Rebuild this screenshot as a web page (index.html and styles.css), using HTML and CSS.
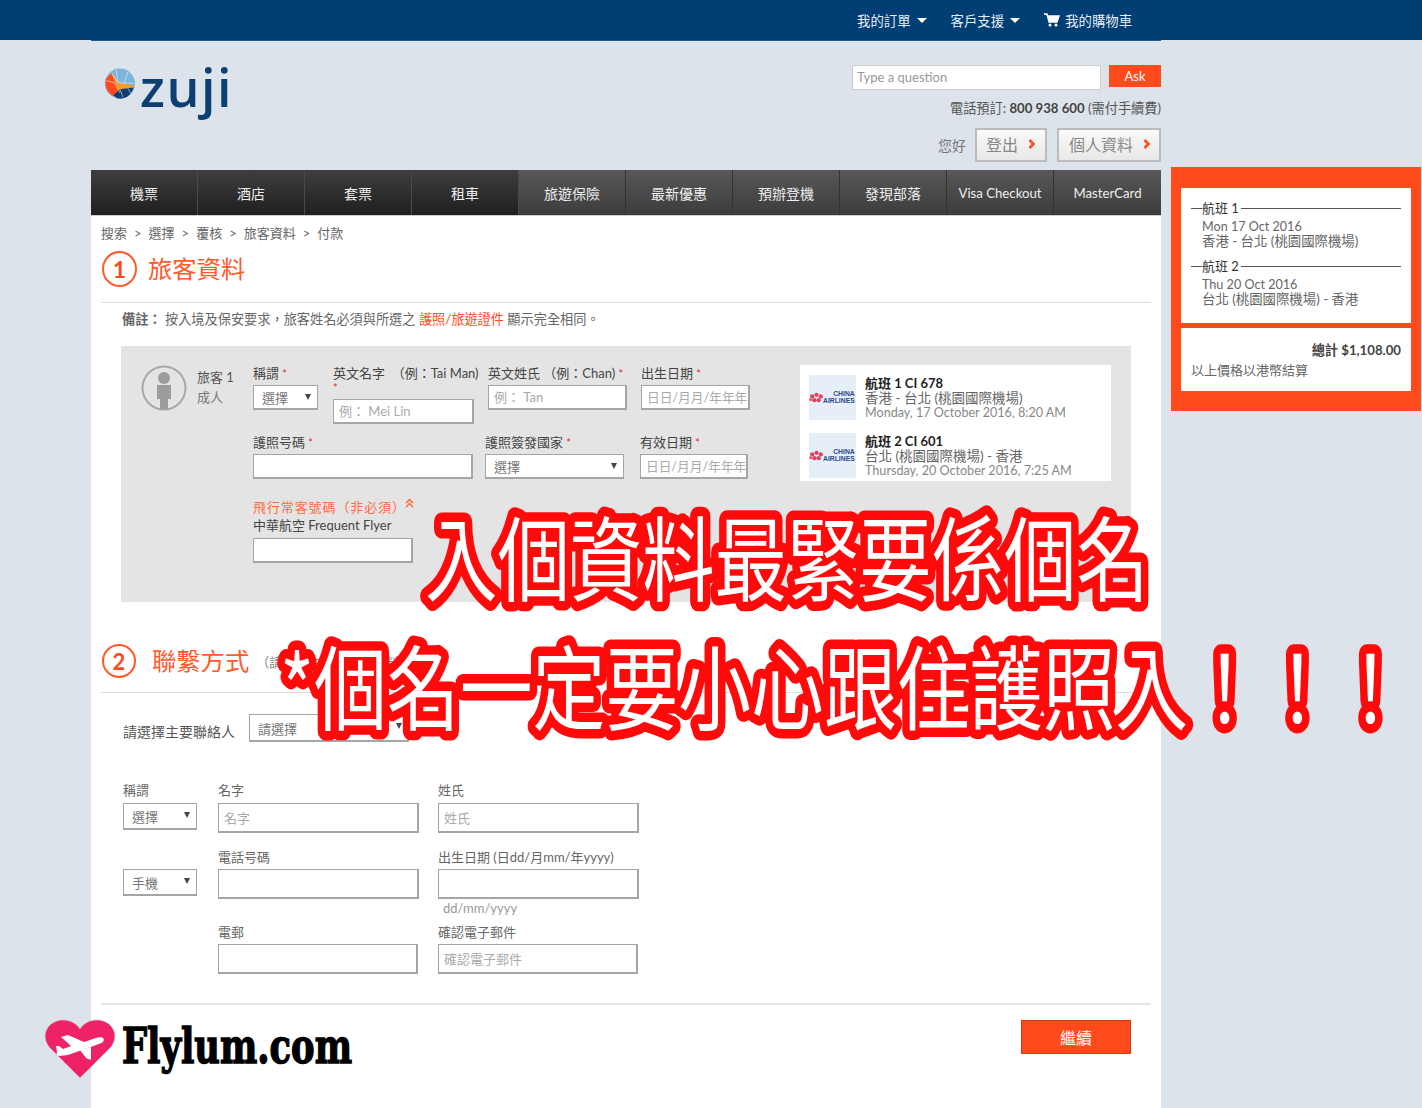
FILE: index.html
```html
<!DOCTYPE html>
<html lang="zh-Hant">
<head>
    <meta charset="UTF-8">
    <title>Zuji</title>
    <link rel="stylesheet" href="styles.css">
</head>
<body>
    <div class="topbar">
        <div class="topbar-inner">
            <span class="top-link">我的訂單<i class="caret"></i></span>
            <span class="top-link">客戶支援<i class="caret"></i></span>
            <span class="top-link cart-link">
                <svg class="cart" viewBox="0 0 16 14" width="16" height="14"><path d="M0 1h3l2 8h8l2-6H4" fill="#fff" stroke="#fff" stroke-width="1.4"/><circle cx="6" cy="12" r="1.5" fill="#fff"/><circle cx="12" cy="12" r="1.5" fill="#fff"/></svg>
                我的購物車
            </span>
        </div>
    </div>

    <div class="page">
        <div class="wrap">
            <header class="header">
                <div class="logo">
                    <svg class="globe" viewBox="0 0 32 32" width="32" height="31">
                        <ellipse cx="16" cy="16" rx="15.500" ry="15.500" fill="#7fb4de"/>
                        <path d="M8 5l5 10 18 3-3 7-13 1-6-9-2-6z" fill="#f59a2b"/>
                        <path d="M1 12l6-7 3 8 6 13-6 3C4 27 1 21 1 16z" fill="#ff4b1b"/>
                        <path d="M9 28l7-6 14-2c-2 7-7 11.500-14 11.500-3 0-5-1.500-7-3.500z" fill="#0d3f70"/>
                        <path d="M7 5l7 10 17 1M12 2l2 13M24 4l-4 13M1 13l9 2 6 11M16 22l3 8M24 21l3 5" stroke="#e6eef5" stroke-width=".6" fill="none"/>
                    </svg>
                    <span class="logo-text">zuji</span>
                </div>
                <div class="header-right">
                    <div class="ask-row">
                        <input class="ask-input" type="text" placeholder="Type a question">
                        <button class="ask-btn" type="button">Ask</button>
                    </div>
                    <div class="phone">電話預訂: <b>800 938 600</b> (需付手續費)</div>
                    <div class="account-row">
                        <span class="hello">您好</span>
                        <a class="acc-btn acc-logout">登出<svg class="chev" viewBox="0 0 8 10" width="8" height="10"><path d="M1.500 1l4 4-4 4" fill="none" stroke="#ff4b1b" stroke-width="2.600"/></svg></a>
                        <a class="acc-btn acc-profile">個人資料<svg class="chev" viewBox="0 0 8 10" width="8" height="10"><path d="M1.500 1l4 4-4 4" fill="none" stroke="#ff4b1b" stroke-width="2.600"/></svg></a>
                    </div>
                </div>
            </header>

            <nav class="nav">
                <a class="tab">機票</a>
                <a class="tab">酒店</a>
                <a class="tab">套票</a>
                <a class="tab">租車</a>
                <a class="tab tab-light">旅遊保險</a>
                <a class="tab tab-light">最新優惠</a>
                <a class="tab tab-light">預辦登機</a>
                <a class="tab tab-light">發現部落</a>
                <a class="tab tab-light tab-latin">Visa Checkout</a>
                <a class="tab tab-light tab-latin">MasterCard</a>
            </nav>

            <main class="main">
                <div class="crumbs">搜索<i>&gt;</i>選擇<i>&gt;</i>覆核<i>&gt;</i>旅客資料<i>&gt;</i>付款</div>

                <div class="section-head head-one">
                    <span class="num">1</span>
                    <h2>旅客資料</h2>
                </div>

                <p class="note"><b>備註：</b> 按入境及保安要求，旅客姓名必須與所選之 <span class="orange">護照/旅遊證件</span> 顯示完全相同。</p>

                <section class="traveller-box">
                    <div class="traveller">
                        <svg class="avatar" viewBox="0 0 46 46" width="46" height="46">
                            <circle cx="23" cy="23" r="21.500" fill="none" stroke="#a8a8a8" stroke-width="2"/>
                            <circle cx="23" cy="13" r="6" fill="#9c9c9c"/>
                            <path d="M16 20h14v14h-3v10h-8V34h-3z" fill="#9c9c9c"/>
                        </svg>
                        <div class="traveller-name"><strong>旅客 1</strong><br>成人</div>
                    </div>

                    <div class="fields">
                        <div class="row row-one">
                            <div class="field w-title">
                                <label>稱謂 <em>*</em></label>
                                <div class="select"><select><option>選擇</option></select></div>
                            </div>
                            <div class="field w-first">
                                <label>英文名字&nbsp;&nbsp;（例：Tai Man)<span class="wrap-star"><em>*</em></span></label>
                                <input class="box-first" type="text" placeholder="例： Mei Lin">
                            </div>
                            <div class="field w-last">
                                <label>英文姓氏&nbsp;（例：Chan) <em>*</em></label>
                                <input class="box-last" type="text" placeholder="例： Tan">
                            </div>
                            <div class="field w-dob">
                                <label>出生日期 <em>*</em></label>
                                <input type="text" placeholder="日日/月月/年年年">
                            </div>
                        </div>
                        <div class="row row-two">
                            <div class="field w-passport">
                                <label>護照号碼 <em>*</em></label>
                                <input type="text">
                            </div>
                            <div class="field w-country">
                                <label>護照簽發國家 <em>*</em></label>
                                <div class="select"><select><option>選擇</option></select></div>
                            </div>
                            <div class="field w-expiry">
                                <label>有效日期 <em>*</em></label>
                                <input type="text" placeholder="日日/月月/年年年">
                            </div>
                        </div>
                        <div class="ff">
                            <div class="ff-toggle">飛行常客號碼（非必須）<svg class="ff-arrows" viewBox="0 0 9 10" width="9" height="10"><path d="M1 5l3.500-3.500L8 5M1 9l3.500-3.500L8 9" fill="none" stroke="#ff6b3d" stroke-width="1.500"/></svg></div>
                            <div class="ff-label">中華航空 Frequent Flyer</div>
                            <input class="ff-input" type="text">
                        </div>
                    </div>

                    <aside class="flights">
                        <div class="flight">
                            <div class="airline">
                                <svg viewBox="0 0 14 10" width="15" height="11"><g fill="#e2415f"><circle cx="7" cy="2.500" r="2"/><circle cx="3" cy="4" r="2"/><circle cx="11" cy="4" r="2"/><circle cx="1.500" cy="7" r="1.200"/><circle cx="5" cy="7.500" r="2"/><circle cx="9" cy="7.500" r="2"/></g></svg>
                                <span>CHINA<br>AIRLINES</span>
                            </div>
                            <div class="flight-text">
                                <b>航班 1 CI 678</b><br>
                                <span class="route">香港 - 台北 (桃園國際機場)</span><br>
                                <span class="when">Monday, 17 October 2016, 8:20 AM</span>
                            </div>
                        </div>
                        <div class="flight">
                            <div class="airline">
                                <svg viewBox="0 0 14 10" width="15" height="11"><g fill="#e2415f"><circle cx="7" cy="2.500" r="2"/><circle cx="3" cy="4" r="2"/><circle cx="11" cy="4" r="2"/><circle cx="1.500" cy="7" r="1.200"/><circle cx="5" cy="7.500" r="2"/><circle cx="9" cy="7.500" r="2"/></g></svg>
                                <span>CHINA<br>AIRLINES</span>
                            </div>
                            <div class="flight-text">
                                <b>航班 2 CI 601</b><br>
                                <span class="route">台北 (桃園國際機場) - 香港</span><br>
                                <span class="when">Thursday, 20 October 2016, 7:25 AM</span>
                            </div>
                        </div>
                    </aside>
                </section>

                <div class="section-head head-two">
                    <span class="num">2</span>
                    <h2>聯繫方式</h2>
                    <small>（請填寫主要聯絡人資料）</small>
                </div>

                <div class="contact-pick">
                    <label>請選擇主要聯絡人</label>
                    <div class="select pick-select"><select><option>請選擇</option></select></div>
                    <a class="orange">清除</a>
                </div>

                <div class="contact-row">
                    <div class="c-col c-a">
                        <label>稱謂</label>
                        <div class="select"><select><option>選擇</option></select></div>
                    </div>
                    <div class="c-col c-b">
                        <label>名字</label>
                        <input type="text" placeholder="名字">
                    </div>
                    <div class="c-col c-b">
                        <label>姓氏</label>
                        <input type="text" placeholder="姓氏">
                    </div>
                </div>
                <div class="contact-row">
                    <div class="c-col c-a">
                        <label>&nbsp;</label>
                        <div class="select"><select><option>手機</option></select></div>
                    </div>
                    <div class="c-col c-b">
                        <label>電話号碼</label>
                        <input type="text">
                    </div>
                    <div class="c-col c-b">
                        <label>出生日期 (日dd/月mm/年yyyy)</label>
                        <input type="text">
                        <div class="hint">dd/mm/yyyy</div>
                    </div>
                </div>
                <div class="contact-row row-mail">
                    <div class="c-col c-a"></div>
                    <div class="c-col c-b">
                        <label>電郵</label>
                        <input type="text">
                    </div>
                    <div class="c-col c-b">
                        <label>確認電子郵件</label>
                        <input type="text" placeholder="確認電子郵件">
                    </div>
                </div>

                <div class="form-foot">
                    <button class="continue" type="button">繼續</button>
                </div>
            </main>
        </div>

        <aside class="summary">
            <div class="sum-card">
                <div class="leg-title"><span>航班 1</span></div>
                <div class="leg-text"><span class="leg-date">Mon 17 Oct 2016</span><br>香港 - 台北 (桃園國際機場)</div>
                <div class="leg-title"><span>航班 2</span></div>
                <div class="leg-text"><span class="leg-date">Thu 20 Oct 2016</span><br>台北 (桃園國際機場) - 香港</div>
            </div>
            <div class="sum-card sum-total">
                <div class="total">總計 $1,108.00</div>
                <div class="currency">以上價格以港幣結算</div>
            </div>
        </aside>
    </div>

    <!-- blog watermark and captions pasted over the screenshot -->
    <svg class="captions" width="1422" height="1108">
        <text class="caption caption-one">入個資料最緊要係個名</text>
        <text class="caption caption-two">*個名一定要小心跟住護照入！！！</text>
    </svg>

    <div class="flylum">
        <svg viewBox="0 0 72 60" width="72" height="60">
            <path d="M36 59L5 28C-5 14 6 1 19 1c8 0 14 4 17 9 3-5 9-9 17-9 13 0 24 13 14 27z" fill="#ee2264" stroke="#c9c9c9" stroke-width=".6"/>
            <path d="M59 19c2 2 0 5-4 6L24 36l-9 1c-2 0-3-3-2-4l-1-6h3l4 3 8-3-10-9 7-2 16 7 12-4c3-1 6-1 7 0z" fill="#fff"/>
            <path d="M36 31l11-3v13l-5-2z" fill="#fff"/>
        </svg>
        <span class="flylum-text">Flylum.com</span>
    </div>
</body>
</html>
```

FILE: styles.css
```css
* {
    box-sizing: border-box;
}
body {
    margin: 0;
    height: 1108px;
    overflow: hidden;
    position: relative;
    background-color: #dce3ea;
    font-family: Lato, "Noto Sans CJK TC", sans-serif;
    font-size: 13px;
    color: #555;
}
input, select, button {
    font-family: Lato, "Noto Sans CJK TC", sans-serif;
}
i, em {
    font-style: normal;
}
.orange {
    color: #ff4b1b;
}

/* top bar */
.topbar {
    height: 40px;
    background-color: #003e73;
}
.topbar-inner {
    width: 1070px;
    height: 40px;
    margin-left: 91px;
    display: flex;
    align-items: center;
    padding-left: 766px;
    color: #e6edf3;
    font-size: 13.400px;
}
.top-link {
    display: flex;
    align-items: center;
    margin-right: 24px;
}
.caret {
    width: 0;
    height: 0;
    margin-left: 6px;
    border-left: 5px solid transparent;
    border-right: 5px solid transparent;
    border-top: 5px solid #fff;
}
.cart {
    margin-right: 5px;
}

.page {
    display: flex;
    align-items: flex-start;
    margin-left: 91px;
}
.wrap {
    width: 1070px;
    border-top: 1px solid #1f5c90;
}

/* header */
.header {
    height: 129px;
    display: flex;
    justify-content: space-between;
}
.logo {
    display: flex;
    align-items: flex-start;
    padding: 27px 0 0 13px;
}
.globe {
    margin-right: 4px;
}
.logo-text {
    margin-top: -21px;
    font-family: "Open Sans", sans-serif;
    font-size: 52px;
    font-weight: 600;
    letter-spacing: 1.500px;
    line-height: 80px;
    color: #0d3f70;
}
.header-right {
    display: flex;
    flex-direction: column;
    align-items: flex-end;
    padding-top: 24px;
}
.ask-row {
    display: flex;
    align-items: flex-start;
}
.ask-input {
    width: 249px;
    height: 25px;
    padding: 0 4px 2px;
    border: 1px solid #ccc;
    border-radius: 2px;
    font-size: 13px;
}
.ask-input::placeholder {
    color: #999;
}
.ask-btn {
    width: 52px;
    height: 22px;
    margin-left: 8px;
    padding: 0;
    border: none;
    background-color: #ff4b1b;
    color: #fff;
    font-size: 13px;
}
.phone {
    margin-top: 8px;
    line-height: 20px;
    font-size: 13.200px;
    color: #555;
}
.phone b {
    color: #444;
}
.account-row {
    display: flex;
    align-items: center;
    margin-top: 10px;
}
.hello {
    margin-right: 9px;
    font-size: 14px;
    color: #777;
}
.acc-btn {
    height: 34px;
    display: flex;
    align-items: center;
    padding-bottom: 2px;
    border: 2px solid #bbb;
    background: linear-gradient(#fafafa, #e8e8e8);
    font-size: 16px;
    color: #888;
}
.acc-logout {
    width: 72px;
    padding-left: 9px;
    margin-right: 10px;
}
.acc-profile {
    width: 104px;
    padding-left: 10px;
}
.chev {
    margin-left: 10px;
}

/* nav */
.nav {
    height: 46px;
    display: flex;
    border-bottom: 1px solid #ccc;
}
.tab {
    width: 107px;
    display: flex;
    align-items: center;
    justify-content: center;
    border-right: 1px solid #4a4a4a;
    background: linear-gradient(#3e3e3e, #1f1f1f);
    color: #eee;
    font-size: 14px;
}
.tab-light {
    background: linear-gradient(#585858, #3c3c3c);
    border-right-color: #333;
}
.tab-latin {
    font-size: 13.200px;
}
.tab:last-child {
    border-right: none;
}

/* main panel */
.main {
    height: 892px;
    padding: 7px 10px 0;
    background-color: #fff;
}
.crumbs {
    height: 20px;
    line-height: 20px;
    color: #666;
}
.crumbs i {
    margin: 0 7px;
}
.section-head {
    display: flex;
    align-items: center;
    border-bottom: 1px solid #ddd;
}
.head-one {
    margin-top: 8px;
    padding-bottom: 15px;
}
.head-one h2 {
    font-size: 24.300px;
    margin-left: 11px;
}
.section-head h2 {
    margin-top: 0;
    margin-bottom: 0;
    font-weight: 400;
    color: #ff5a2a;
    line-height: 34px;
}
.num {
    width: 35px;
    height: 36px;
    display: flex;
    align-items: center;
    justify-content: center;
    margin-left: 1px;
    border: 2px solid #ff5a2a;
    border-radius: 50%;
    font-size: 23px;
    font-weight: 700;
    color: #ff4b1b;
}
.note {
    margin: 6px 0 17px 21px;
    line-height: 20px;
    font-size: 13.200px;
    color: #666;
}

/* traveller box */
.traveller-box {
    height: 256px;
    margin: 0 20px;
    padding: 19px 20px 0;
    display: flex;
    background-color: #e4e4e4;
}
.traveller {
    width: 112px;
    display: flex;
    align-items: flex-start;
    flex-shrink: 0;
}
.traveller-name {
    margin: 2px 0 0 10px;
    line-height: 20px;
    color: #777;
}
.traveller-name strong {
    font-weight: 400;
    color: #555;
}
.fields {
    width: 497px;
    flex-shrink: 0;
}
.row {
    display: flex;
    align-items: flex-start;
}
.row-two {
    margin-top: 10px;
}
.field label, .c-col label {
    display: block;
    height: 20px;
    line-height: 16px;
    white-space: nowrap;
    color: #444;
}
.field em {
    color: #e0262c;
    font-size: 11px;
}
.wrap-star {
    display: block;
    height: 14px;
    line-height: 12px;
}
.field label:has(.wrap-star) {
    height: 34px;
}
.w-title {
    width: 80px;
}
.w-title .select {
    width: 65px;
}
.w-first {
    width: 155px;
}
.box-first {
    width: 141px;
}
.w-last {
    width: 153px;
}
.box-last {
    width: 139px;
}
.w-dob {
    width: 109px;
}
.w-passport {
    width: 232px;
}
.w-passport input {
    width: 220px;
}
.w-country {
    width: 155px;
}
.w-country .select {
    width: 139px;
}
.w-expiry {
    width: 108px;
}
input {
    width: 100%;
    height: 25px;
    padding: 0 5px;
    border: 1px solid #a5a5a5;
    border-bottom-width: 2px;
    border-right-width: 2px;
    background-color: #fff;
    font-size: 13px;
    color: #555;
}
input::placeholder {
    color: #aaa;
    opacity: 1;
}
.w-dob input, .w-expiry input {
    padding-right: 0;
    font-size: 12.700px;
}
.select {
    position: relative;
    width: 100%;
    height: 25px;
}
.select::after {
    content: "";
    position: absolute;
    top: 9px;
    right: 7px;
    border-left: 3px solid transparent;
    border-right: 3px solid transparent;
    border-top: 6px solid #444;
}
.select select {
    width: 100%;
    height: 100%;
    padding: 2px 0 0 8px;
    appearance: none;
    border: 1px solid #a5a5a5;
    border-bottom-width: 2px;
    border-radius: 0;
    background-color: #fff;
    font-size: 13px;
    color: #777;
}
.ff {
    margin-top: 18px;
}
.ff-toggle {
    height: 20px;
    display: flex;
    align-items: flex-start;
    line-height: 20px;
    letter-spacing: 0.900px;
    color: #ff6b3d;
}
.ff-arrows {
    margin: 1px 0 0 -1px;
}
.ff-label {
    height: 21px;
    line-height: 16px;
    color: #444;
}
.ff-input {
    width: 160px;
}

/* flight card */
.flights {
    width: 311px;
    height: 116px;
    margin-left: 50px;
    padding: 10px 9px 0;
    background-color: #fff;
}
.flight {
    display: flex;
    height: 58px;
}
.airline {
    width: 47px;
    height: 45px;
    display: flex;
    align-items: center;
    background-color: #e6eff7;
    font-family: "Liberation Sans", sans-serif;
    font-size: 6.800px;
    font-weight: 700;
    line-height: 6.500px;
    text-align: right;
    color: #2b4a8a;
}
.airline svg {
    flex-shrink: 0;
    margin-right: -1px;
}
.flight-text {
    margin: 1px 0 0 9px;
    line-height: 14.500px;
    white-space: nowrap;
}
.flight-text b {
    color: #222;
    font-weight: 700;
}
.route {
    font-size: 13.500px;
    color: #666;
}
.when {
    font-size: 12.600px;
    color: #888;
}

/* contact */
.head-two {
    margin-top: 42px;
    padding-bottom: 14px;
}
.head-two h2 {
    margin-left: 16px;
    font-size: 24.300px;
}
.head-two small {
    margin-left: 7px;
    font-size: 13px;
    color: #888;
}
.head-two .num {
    width: 34px;
    height: 34px;
    margin-left: 1px;
    font-size: 22px;
}
.contact-pick {
    display: flex;
    align-items: center;
    margin: 21px 0 0 22px;
}
.contact-pick label {
    width: 126px;
    padding-top: 5px;
    font-size: 14px;
    white-space: nowrap;
    color: #555;
}
.pick-select {
    width: 160px;
    height: 28px;
    margin-right: 13px;
}
.contact-row {
    display: flex;
    align-items: flex-start;
    margin: 14px 0 0 22px;
}
.contact-pick + .contact-row {
    margin-top: 39px;
}
.row-mail {
    margin-top: 4px;
}
.c-col label {
    height: 22px;
    line-height: 18px;
    color: #666;
}
.contact-row + .contact-row label {
    line-height: 20px;
}
.c-a {
    width: 95px;
}
.c-a .select {
    width: 74px;
    height: 27px;
}
.c-b {
    width: 220px;
}
.c-b input {
    width: 201px;
    height: 30px;
}
.hint {
    height: 19px;
    padding-left: 5px;
    line-height: 18px;
    color: #999;
}
.row-mail .c-col input {
    width: 200px;
}
.form-foot {
    margin-top: 29px;
    padding: 15px 20px 0 0;
    display: flex;
    justify-content: flex-end;
    border-top: 2px solid #e6e6e6;
}
.continue {
    width: 110px;
    height: 34px;
    border: 1px solid #d63c10;
    background-color: #ff4b1b;
    color: #fff;
    font-size: 16px;
}

/* summary */
.summary {
    width: 250px;
    height: 244px;
    margin: 127px 0 0 10px;
    padding: 21px 10px 0;
    background-color: #ff4b1b;
}
.sum-card {
    height: 135px;
    margin-bottom: 5px;
    padding: 10px;
    background-color: #fff;
}
.leg-title {
    height: 21px;
    line-height: 21px;
    background: linear-gradient(#555, #555) left 10px / 100% 1px no-repeat;
    color: #333;
}
.leg-title span {
    margin-left: 11px;
    padding-right: 2px;
    background-color: #fff;
}
.leg-text {
    height: 37px;
    padding-left: 11px;
    line-height: 15px;
    font-size: 13.400px;
    color: #666;
}
.leg-date {
    font-size: 12.600px;
}
.sum-total {
    height: 63px;
}
.total {
    text-align: right;
    line-height: 24px;
    font-size: 13.200px;
    font-weight: 700;
    color: #444;
}
.currency {
    line-height: 16px;
    color: #666;
}

/* captions over the page */
.captions {
    position: absolute;
    left: 0;
    top: 0;
}
.caption {
    font-family: "Noto Sans CJK TC", sans-serif;
    font-size: 92px;
    fill: #fff;
    stroke: #ff0a0a;
    stroke-width: 19px;
    stroke-linejoin: round;
    paint-order: stroke fill;
}
.caption-one {
    transform: translate(425px, 594px) scaleX(0.787);
}
.caption-two {
    transform: translate(280px, 723px) scaleX(0.792);
}

/* watermark */
.flylum {
    position: absolute;
    left: 44px;
    top: 1019px;
    display: flex;
    align-items: flex-start;
}
.flylum-text {
    margin: -3px 0 0 6px;
    font-family: "DejaVu Serif", serif;
    font-size: 48px;
    font-weight: 700;
    line-height: 60px;
    color: #000;
    -webkit-text-stroke: 1.500px #000;
    display: inline-block;
    transform: scaleX(0.735);
    transform-origin: left top;
}
```
